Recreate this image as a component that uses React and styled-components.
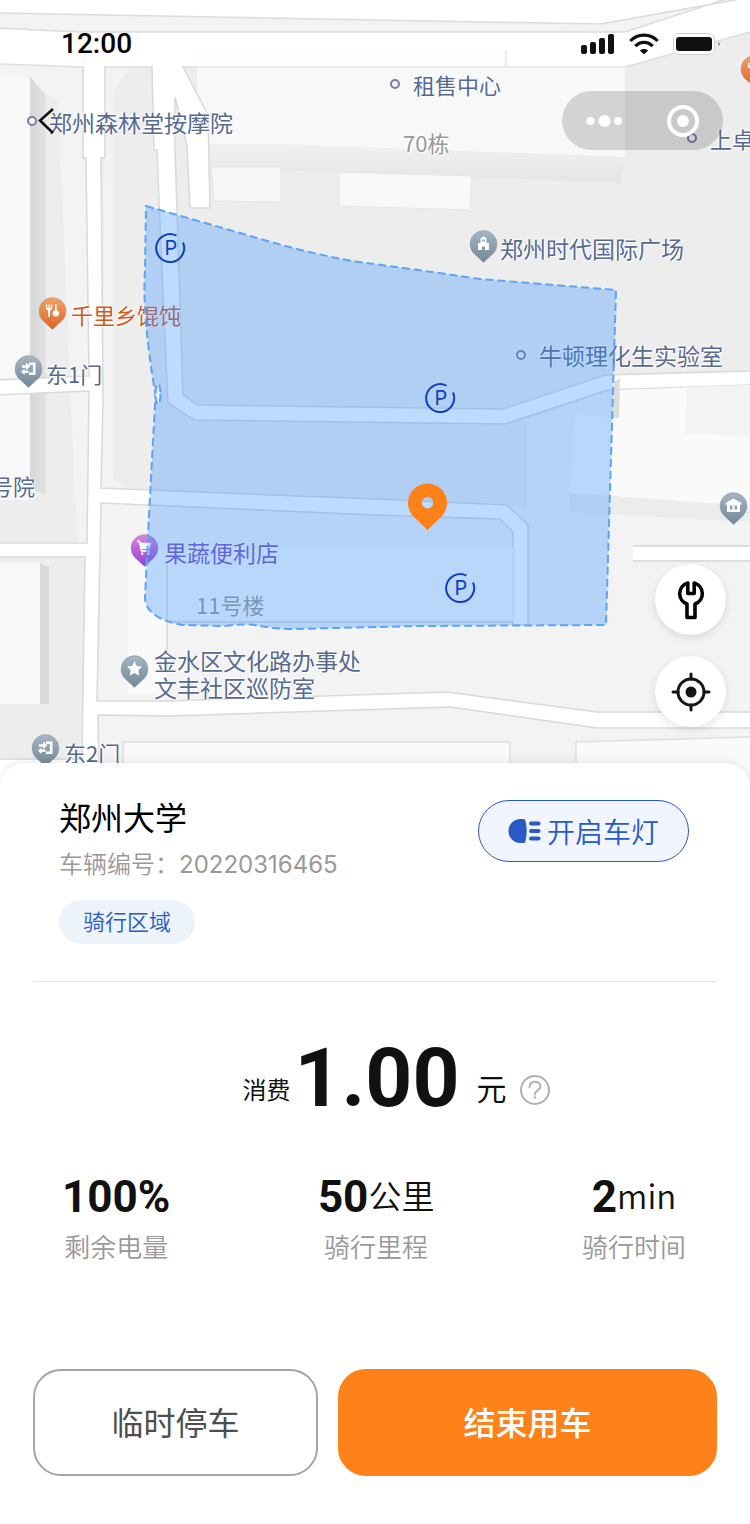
import React from "react";
import styled, { createGlobalStyle } from "styled-components";

const cjk = '"Noto Sans CJK SC", sans-serif';

const GlobalStyle = createGlobalStyle`
  *, *::before, *::after { box-sizing: border-box; }
  body { margin: 0; background: #fff; color: #111; font-family: ${cjk}; }
  button { font: inherit; margin: 0; padding: 0; border: 0; background: none; cursor: pointer; }
  p, h1, dl, dd, dt { margin: 0; font-weight: 400; }
  svg { display: block; flex: none; }
`;

const Screen = styled.div`
  min-height: 100vh;
  display: flex;
  flex-direction: column;
  overflow: hidden;
`;

/* ---------- Map ---------- */
const MapArea = styled.section`
  position: relative;
  min-height: 788px;
  display: flex;
  flex-direction: column;
  background: #f3f3f3;
`;
const MapLayer = styled.div`
  position: absolute;
  inset: 0;
  overflow: hidden;
`;
const Layer = styled.svg`
  position: absolute;
  left: 0;
  top: 0;
`;
const tones = { slate: "#566a8e", orange: "#cf5a22", purple: "#7450c8", grey: "#999" };
const PlaceLabel = styled.span`
  position: absolute;
  left: ${(p) => p.$x}px;
  top: ${(p) => p.$y}px;
  color: ${(p) => tones[p.$tone || "slate"]};
  font-size: ${(p) => (p.$large ? 23 : 22)}px;
  line-height: 27px;
  font-weight: 400;
  white-space: pre;
  text-shadow: 0 0 2px #fff, 1px 1px 1px #fff, -1px -1px 1px #fff;
`;
const MapPin = styled.div`
  position: absolute;
  left: ${(p) => p.$x}px;
  top: ${(p) => p.$y}px;
`;

const edge = { stroke: "#d9d9d9", strokeWidth: 1.5, fill: "#fff" };

function BaseMap() {
  return (
    <Layer width="750" height="788" viewBox="0 0 750 788" aria-hidden="true">
      <defs>
        <linearGradient id="wallH" x1="0" x2="1"><stop offset="0" stopColor="#d6d6d6" /><stop offset="1" stopColor="#e2e2e2" /></linearGradient>
        <linearGradient id="wallV" x1="0" x2="0" y1="0" y2="1"><stop offset="0" stopColor="#f0f0f0" /><stop offset="1" stopColor="#e4e6e6" /></linearGradient>
      </defs>
      <rect width="750" height="788" fill="#ededed" />
      <path d="M101 488 507 505 527 508V420L608 390 750 385V788H95Z" fill="#f3f3f3" />
      <path d="M0 65 83 67 86 158 89 380 87 543H77L58 99 0 78Z" fill="#f3f3f3" />
      <path d="M105 67H130L113 92V478L128 489H101L103 400Z" fill="#f3f3f3" />
      {/* left-hand buildings */}
      <path d="M0 77H30V500H0Z" fill="#f8f8f8" />
      <path d="M30 77 46 95V495L30 488Z" fill="url(#wallH)" />
      <path d="M0 563H40V704H0Z" fill="#f8f8f8" />
      <path d="M40 563 49 567V704H40Z" fill="#dadada" />
      {/* street along the top */}
      <path d="M0 0H750V32L625 67H83L0 64Z" fill="#fff" />
      <path d="M-3 13 375 20 600 24 735 0 735 -4 625 32H80L-3 28Z" fill="#f3f3f3" stroke="#dcdcdc" strokeWidth="1.5" />
      <path d="M0 64 83 67M104 67H152M183 67H625L750 32M506 50V66" fill="none" stroke="#dedede" strokeWidth="1.5" />
      {/* large building and its annexes */}
      <path d="M197 52H590L625 67V157L340 149 207 145 197 140Z" fill="#f8f8f8" />
      <path d="M197 52H506V67H197Z" fill="#fdfdfd" />
      <path d="M506 40H600L625 67H506Z" fill="#fff" />
      <path d="M197 67H625M506 50V66" stroke="#e6e6e6" strokeWidth="1.5" />
      <path d="M204 144 280 144 624 157 621 183 500 178 340 173 210 167Z" fill="url(#wallV)" />
      <path d="M211 167H281V202L214 201Z" fill="#f7f7f7" stroke="#e5e5e5" />
      <path d="M339 172 472 176 470 210 339 206Z" fill="#f8f8f8" stroke="#e5e5e5" />
      {/* roads */}
      <path d="M83 67V158H86L89 376 -3 380V395L89 391 87 543H-3V557H85L82 759H-3V790H99L98 715 170 716 450 707 597 728H753V712H597L447 692 167 701 97 701 101 503 375 515 500 519 513 532V625H528V525L507 505 375 499 101 488 103 400 101 158H105V67Z" {...edge} />
      <path d="M152 67 154 150H157L161 250 168 403 194 420 505 424 608 390 753 385V371L605 375 503 409 198 405 183 395 175 150V97L187 145 190 208H210L208 115 183 67Z" {...edge} />
      <path d="M84 60H104V72H84ZM153 60H182V68H153Z" fill="#fff" />
      <path d="M633 546H752V561H633Z" fill="#fff" />
      <path d="M633 546H752M633 561H752" stroke="#dedede" strokeWidth="2" />
      {/* buildings inside and below the zone */}
      <path d="M128 548H513V622H167V695H128Z" fill="#fafafa" />
      <path d="M167 565V650M170 622H513" stroke="#dedede" strokeWidth="2" />
      <path d="M575 415 614 417 619 390 750 385V506L570 493Z" fill="#fafafa" />
      <path d="M570 493 750 506V522L569 512Z" fill="#ebecec" />
      <path d="M687 387 750 385V437L685 433Z" fill="#f3f3f3" />
      <path d="M614 382 620 378 619 418H613Z" fill="#dcdcdc" />
      <path d="M123 742H510V790H123ZM576 742 752 737V790H576Z" fill="#fafafa" stroke="#dfdfdf" strokeWidth="1.5" />
      {/* small ring markers */}
      <g fill="#f5f5f5" stroke="#7b79ae" strokeWidth="2">
        <circle cx="32" cy="121" r="4" /><circle cx="395" cy="84" r="4" />
        <circle cx="692" cy="138" r="4" /><circle cx="521" cy="355" r="4" />
      </g>
    </Layer>
  );
}

function RidingZone() {
  return (
    <Layer width="750" height="788" viewBox="0 0 750 788" aria-hidden="true">
      <path
        d="M146 206 240 233Q320 257 366 263T480 279L616 290 606 625 420 626 293 629Q275 629 261 626T225 626L182 625Q145 618 145 597L149 515 155 405Q156 398 155 392 142 315 145 270Z"
        fill="rgb(55,146,255)" fillOpacity=".33" stroke="#5aa4f9" strokeWidth="2" strokeDasharray="8 4"
      />
      <ellipse cx="158" cy="394" rx="2.500" ry="10" fill="#ededed" stroke="#5aa4f9" strokeWidth="2" strokeDasharray="8 3" />
    </Layer>
  );
}

const pinFill = { slate: ["#a5b6c4", "#718797"], orange: ["#f2a266", "#dc6327"], purple: ["#dd83dc", "#9142d2"] };
const glyphs = {
  lock: <path d="M9 20V13H11.500V8.500L14.500 6 17.500 8.500V13H20V20H16V16.500H13V20ZM13.200 9.500H15.800V11.500H13.200Z" fillRule="evenodd" />,
  food: <><path d="M8 7.500V12L10.200 13.800V20H12V13.800L14.200 12V7.500H12.900V11H11.800V7.500H10.400V11H9.300V7.500Z" /><path d="M17 7H18.600V13.200A3.300 3.300 0 1 1 17 13.200Z" /></>,
  gate: <path d="M15 7.500H21.500V20H15V17.600H18.900V9.900H15ZM12 7.500 16.500 11.300 12 15V12.800H8V10.200H12ZM10.500 20 7 16.700 10.500 13.700V15.500H14.500V18H10.500Z" />,
  cart: <path d="M7 6.500H10L11 8.800H21.500L19.200 15H12L12.300 16H19.500V17.700H11L8.700 8.300H7ZM11 18.500H13.300V20.800H11ZM17 18.500H19.300V20.800H17Z" />,
  star: <path d="M14.500 6 16.900 10.900 22 11.600 18.300 15.200 19.200 20.400 14.500 18 9.800 20.400 10.700 15.200 7 11.600 12.100 10.900Z" />,
  house: <path d="M14.500 6.500 22.500 11V12.800H21V20H8V12.800H6.500V11ZM11 13.500V17.500H13.400V13.500ZM15.600 13.500V17.500H18V13.500Z" fillRule="evenodd" />,
};
function PlacePin({ x, y, tone = "slate", icon }) {
  const id = `pin-${icon}-${x}`;
  return (
    <MapPin $x={x} $y={y}>
      <svg width="29" height="34" viewBox="0 0 29 34" aria-hidden="true">
        <defs><linearGradient id={id} x1="0" x2="0" y1="0" y2="1">
          <stop offset="0" stopColor={pinFill[tone][0]} /><stop offset="1" stopColor={pinFill[tone][1]} />
        </linearGradient></defs>
        <path d="M14.500 32.500 5 23.700A13.500 13.500 0 1 1 24 23.700Z" fill={`url(#${id})`} stroke="#8a8f96" strokeOpacity=".35" />
        <g fill="#fff">{glyphs[icon]}</g>
      </svg>
    </MapPin>
  );
}
function ParkingSpot({ x, y }) {
  return (
    <MapPin $x={x} $y={y}>
      <svg width="32" height="32" viewBox="0 0 32 32" role="img" aria-label="停车点">
        <path d="M29 10.500A14 14 0 1 1 22.500 3.600" fill="none" stroke="#0e40bd" strokeWidth="2" />
        <text x="17" y="23" textAnchor="middle" fontFamily="Inter, sans-serif" fontSize="20" fill="#0e40bd">P</text>
      </svg>
    </MapPin>
  );
}

/* ---------- Bars over the map ---------- */
const StatusBar = styled.div`
  position: relative;
  display: flex;
  align-items: center;
  justify-content: space-between;
  height: 88px;
  padding: 0 30px 0 61px;
  font: 500 28px/32px Roboto, sans-serif;
  color: #000;
`;
const StatusIcons = styled.div`
  display: flex;
  align-items: center;
  gap: 14px;
`;
const NavBar = styled.nav`
  position: relative;
  display: flex;
  align-items: center;
  justify-content: space-between;
  padding: 3px 27px 0 30px;
`;
const BackButton = styled.button`
  display: grid;
  place-items: center;
  width: 32px;
  height: 44px;
`;
const Capsule = styled.div`
  display: flex;
  width: 161px;
  height: 59px;
  border-radius: 30px;
  background: rgba(0, 0, 0, 0.15);
`;
const CapsuleButton = styled.button`
  flex: 1;
  display: grid;
  place-items: center;
`;
const MapTools = styled.div`
  position: relative;
  display: flex;
  flex-direction: column;
  align-self: flex-end;
  gap: 21px;
  margin-top: auto;
  padding: 0 24px 61px 0;
`;
const ToolButton = styled.button`
  display: grid;
  place-items: center;
  width: 71px;
  height: 71px;
  border-radius: 50%;
  background: #fff;
  box-shadow: 0 3px 10px rgba(0, 0, 0, 0.1);
`;

/* ---------- Ride sheet ---------- */
const Sheet = styled.main`
  position: relative;
  flex: 1;
  margin-top: -25px;
  padding: 35px 33px 48px;
  border-radius: 25px 25px 0 0;
  background: #fff;
  box-shadow: 0 -2px 10px rgba(0, 0, 0, 0.08);
`;
const SheetHeader = styled.header`
  display: flex;
  align-items: flex-start;
  justify-content: space-between;
  padding: 0 28px 37px 26px;
  border-bottom: 1px solid #e4e4e4;
`;
const PlaceName = styled.h1`
  font-size: 32px;
  line-height: 36px;
  color: #000;
`;
const BikeNumber = styled.p`
  display: flex;
  height: 30px;
  margin-top: 14px;
  font-size: 24px;
  line-height: 30px;
  font-weight: 350;
  color: #999;
`;
const BikeDigits = styled.span`
  font-family: Inter, sans-serif;
  font-weight: 400;
  line-height: 34px;
`;
const ZoneTag = styled.span`
  display: flex;
  justify-content: center;
  width: 136px;
  height: 44px;
  margin-top: 22px;
  border-radius: 22px;
  background: #ecf4f9;
  color: #2859c5;
  font-size: 22px;
  line-height: 40px;
  font-weight: 350;
`;
const LightButton = styled.button`
  display: flex;
  align-items: center;
  justify-content: center;
  gap: 6px;
  width: 211px;
  height: 62px;
  margin-top: 2px;
  border: 1px solid #2859c5;
  border-radius: 31px;
  background: #f0f5ff;
  color: #2859c5;
  font-size: 28px;
  line-height: 60px;
  font-weight: 350;
`;
const Cost = styled.div`
  display: grid;
  grid-template-columns: 1fr auto 1fr;
  align-items: end;
  margin-top: 54px;
`;
const CostCaption = styled.span`
  justify-self: end;
  padding-bottom: 13px;
  font-size: 24px;
  line-height: 36px;
`;
const CostValue = styled.strong`
  padding-left: 4px;
  font: 700 82px/84px Roboto, sans-serif;
`;
const CostUnit = styled.span`
  display: flex;
  align-items: flex-end;
  gap: 14px;
  padding: 0 0 15px 17px;
  font-size: 30px;
  line-height: 36px;
`;
const Stats = styled.dl`
  display: grid;
  grid-template-columns: repeat(3, auto);
  justify-content: space-between;
  margin-top: 55px;
  padding: 0 31px 0 29px;
`;
const Stat = styled.div`
  display: flex;
  flex-direction: column-reverse;
  align-items: center;
  gap: 12px;
`;
const StatLabel = styled.dt`
  font-size: 26px;
  line-height: 30px;
  font-weight: 350;
  color: #999;
`;
const StatValue = styled.dd`
  display: flex;
  height: 44px;
  font: 700 44px/44px Roboto, sans-serif;
`;
const StatUnit = styled.span`
  font: 350 33px/40px ${cjk};
`;
const Actions = styled.div`
  display: flex;
  gap: 20px;
  margin-top: 108px;
`;
const ActionButton = styled.button`
  flex: ${(p) => (p.$primary ? "4 1 0" : "3 1 0")};
  min-width: 0;
  height: 107px;
  padding-bottom: 4px;
  border: 2px solid ${(p) => (p.$primary ? "#ff8119" : "#a5a5a5")};
  border-radius: 28px;
  background: ${(p) => (p.$primary ? "#ff8119" : "#fff")};
  color: ${(p) => (p.$primary ? "#fff" : "#4d4d4d")};
  font-size: 32px;
  font-weight: ${(p) => (p.$primary ? 500 : 400)};
`;

const places = [
  { text: "郑州森林堂按摩院", x: 49, y: 109, large: true },
  { text: "租售中心", x: 413, y: 71 },
  { text: "70栋", x: 403, y: 129, tone: "grey" },
  { text: "上卓", x: 710, y: 125 },
  { text: "郑州时代国际广场", x: 500, y: 235, large: true },
  { text: "千里乡馄饨", x: 71, y: 301, tone: "orange" },
  { text: "东1门", x: 46, y: 360 },
  { text: "牛顿理化生实验室", x: 539, y: 342, large: true },
  { text: "号院", x: -9, y: 472 },
  { text: "果蔬便利店", x: 164, y: 539, tone: "purple", large: true },
  { text: "11号楼", x: 196, y: 591, tone: "grey" },
  { text: "金水区文化路办事处\n文丰社区巡防室", x: 154, y: 647, large: true },
  { text: "东2门", x: 64, y: 739 },
];
const pins = [
  { x: 469, y: 230, icon: "lock" },
  { x: 38, y: 297, icon: "food", tone: "orange" },
  { x: 14, y: 355, icon: "gate" },
  { x: 130, y: 534, icon: "cart", tone: "purple" },
  { x: 120, y: 655, icon: "star" },
  { x: 31, y: 734, icon: "gate" },
  { x: 719, y: 492, icon: "house" },
  { x: 740, y: 55, icon: "food", tone: "orange" },
];
const stats = [
  { label: "剩余电量", value: "100%" },
  { label: "骑行里程", value: "50", unit: "公里" },
  { label: "骑行时间", value: "2", unit: "min" },
];

export default function App() {
  return (
    <>
      <GlobalStyle />
      <Screen>
        <MapArea>
          <MapLayer>
            <BaseMap />
            {pins.map((p) => <PlacePin key={p.icon + p.x} {...p} />)}
            {places.map((p) => (
              <PlaceLabel key={p.text} $x={p.x} $y={p.y} $tone={p.tone} $large={p.large}>{p.text}</PlaceLabel>
            ))}
            <RidingZone />
            <ParkingSpot x={154} y={232} />
            <ParkingSpot x={424} y={382} />
            <ParkingSpot x={444} y={572} />
            <MapPin $x={408} $y={483}>
              <svg width="39" height="47" viewBox="0 0 39 47" role="img" aria-label="车辆位置">
                <path d="M19.500 47 5.500 33.500A19.500 19.500 0 1 1 33.500 33.500ZM19.500 14A5.700 5.700 0 1 0 19.500 25.400 5.700 5.700 0 0 0 19.500 14Z" fill="#ff8119" fillRule="evenodd" />
              </svg>
            </MapPin>
          </MapLayer>

          <StatusBar>
            <span>12:00</span>
            <StatusIcons>
              <svg width="34" height="20" viewBox="0 0 34 20" fill="#111" aria-hidden="true">
                <rect x="0" y="11" width="6" height="9" rx="2" /><rect x="9" y="8" width="6" height="12" rx="2" />
                <rect x="18" y="4" width="6" height="16" rx="2" /><rect x="27" y="0" width="6" height="20" rx="2" />
              </svg>
              <svg width="30" height="22" viewBox="0 0 30 22" fill="none" stroke="#111" strokeWidth="3.200" aria-hidden="true">
                <path d="M1.300 8C9 .2 21 .2 28.700 8M6.300 13.200C11.300 8 18.700 8 23.700 13.200" />
                <path d="M15 21.500 10.800 17.600C13 15.500 17 15.500 19.200 17.600Z" fill="#111" stroke="none" />
              </svg>
              <svg width="47" height="22" viewBox="0 0 47 22" aria-hidden="true">
                <rect x=".5" y=".5" width="41" height="21" rx="5" fill="#fff" stroke="#d2d2d2" />
                <rect x="3" y="4" width="36" height="14" rx="3" fill="#111" />
                <path d="M45.500 9V13C47 12 47 10 45.500 9Z" fill="#555" />
              </svg>
            </StatusIcons>
          </StatusBar>

          <NavBar>
            <BackButton aria-label="返回">
              <svg width="16" height="26" viewBox="0 0 16 26" fill="none" stroke="#111" strokeWidth="2.500" aria-hidden="true"><path d="M15 1 2 12.500 15 25" /></svg>
            </BackButton>
            <Capsule>
              <CapsuleButton aria-label="更多">
                <svg width="40" height="12" viewBox="0 0 40 12" fill="#fff" aria-hidden="true"><circle cx="8.500" cy="6" r="4" /><circle cx="22.500" cy="6" r="6" /><circle cx="36" cy="6" r="4" /></svg>
              </CapsuleButton>
              <CapsuleButton aria-label="关闭">
                <svg width="32" height="32" viewBox="0 0 32 32" aria-hidden="true"><circle cx="16" cy="16" r="14" fill="none" stroke="#fff" strokeWidth="4" /><circle cx="16" cy="16" r="6" fill="#fff" /></svg>
              </CapsuleButton>
            </Capsule>
          </NavBar>

          <MapTools>
            <ToolButton aria-label="报修">
              <svg width="28" height="40" viewBox="0 0 28 40" fill="none" stroke="#050505" strokeWidth="3.600" strokeLinejoin="round" aria-hidden="true">
                <path d="M10.800 3V13.500H17.200V3A11 11 0 0 1 18 24V37.500H10V24A11 11 0 0 1 10.800 3Z" />
              </svg>
            </ToolButton>
            <ToolButton aria-label="定位">
              <svg width="40" height="40" viewBox="0 0 40 40" fill="none" stroke="#121616" strokeWidth="3" strokeLinecap="round" aria-hidden="true">
                <circle cx="20" cy="20" r="13" /><circle cx="20" cy="20" r="5.500" fill="#121616" stroke="none" />
                <path d="M20 2V7M20 33V38M2 20H7M33 20H38" />
              </svg>
            </ToolButton>
          </MapTools>
        </MapArea>

        <Sheet>
          <SheetHeader>
            <div>
              <PlaceName>郑州大学</PlaceName>
              <BikeNumber>车辆编号：<BikeDigits>20220316465</BikeDigits></BikeNumber>
              <ZoneTag>骑行区域</ZoneTag>
            </div>
            <LightButton>
              <svg width="33" height="26" viewBox="0 0 33 26" fill="#2859c5" aria-hidden="true">
                <path d="M12.500 1H15.500Q17 1 17.400 2.500 20 13 17.400 23.500 17 25 15.500 25H12.500A12 12 0 0 1 12.500 1Z" />
                <rect x="21" y="3.500" width="11.500" height="4" rx="2" /><rect x="21" y="11" width="11.500" height="4" rx="2" /><rect x="21" y="18.500" width="11.500" height="4" rx="2" />
              </svg>
              开启车灯
            </LightButton>
          </SheetHeader>

          <Cost>
            <CostCaption>消费</CostCaption>
            <CostValue>1.00</CostValue>
            <CostUnit>
              元
              <button aria-label="计费说明">
                <svg width="30" height="30" viewBox="0 0 30 30" fill="none" stroke="#b0b0b0" strokeWidth="2" aria-hidden="true">
                  <circle cx="15" cy="15" r="14" />
                  <path d="M9.500 12C9.500 5 20.500 5 20.500 11.500 20.500 15.500 15 14.500 15 19.500" strokeLinecap="round" />
                  <circle cx="15" cy="22.500" r="1.300" fill="#b0b0b0" stroke="none" />
                </svg>
              </button>
            </CostUnit>
          </Cost>

          <Stats>
            {stats.map((s) => (
              <Stat key={s.label}>
                <StatLabel>{s.label}</StatLabel>
                <StatValue>{s.value}{s.unit && <StatUnit>{s.unit}</StatUnit>}</StatValue>
              </Stat>
            ))}
          </Stats>

          <Actions>
            <ActionButton>临时停车</ActionButton>
            <ActionButton $primary>结束用车</ActionButton>
          </Actions>
        </Sheet>
      </Screen>
    </>
  );
}
